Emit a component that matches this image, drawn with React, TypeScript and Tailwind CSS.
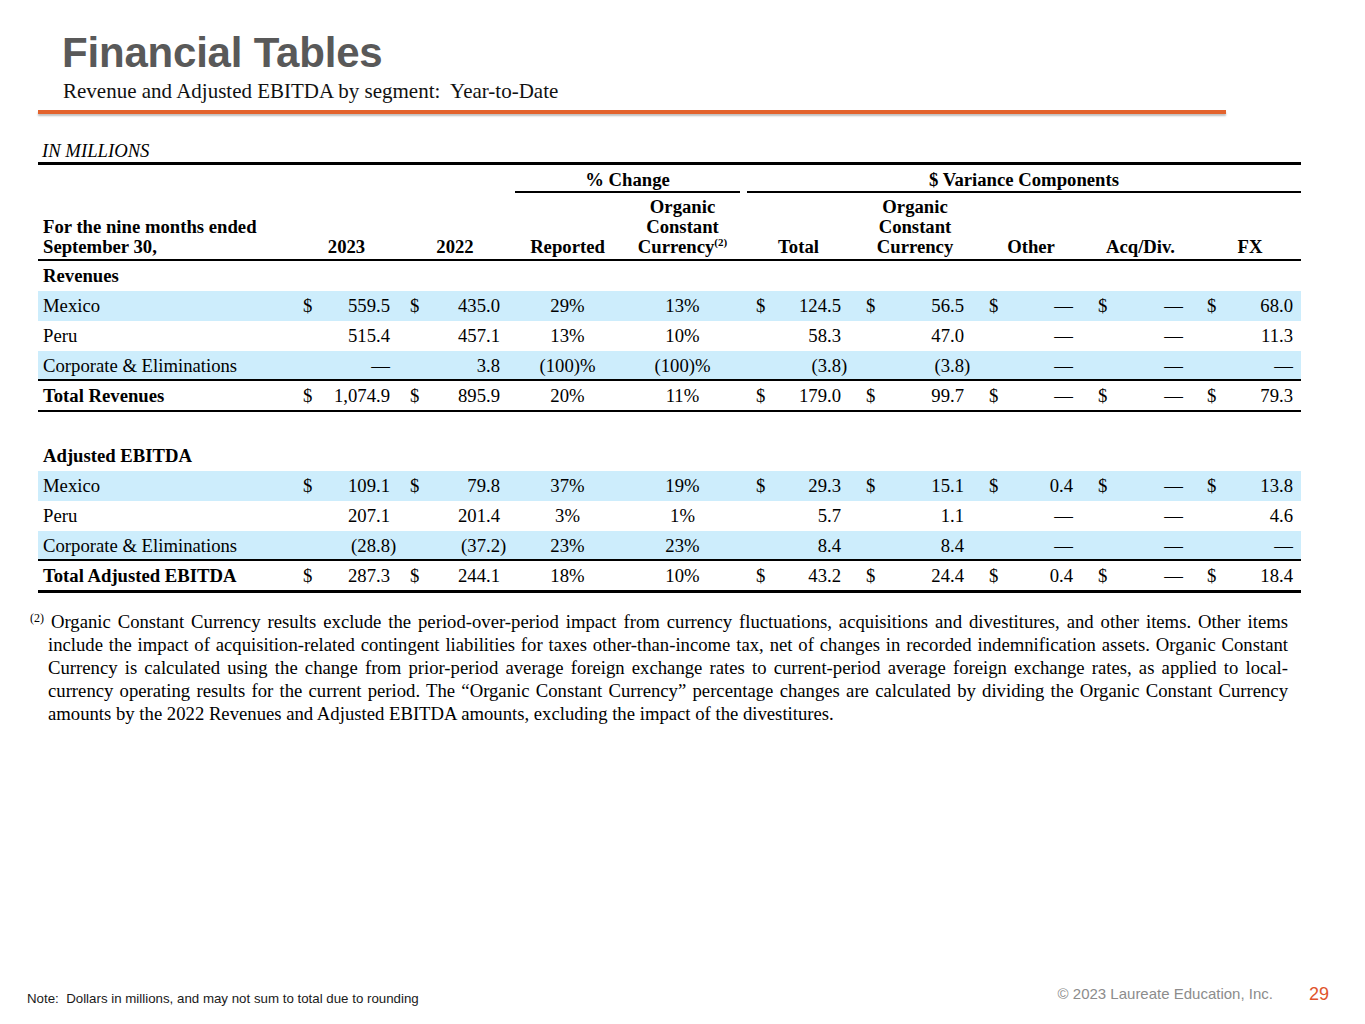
import React from "react"

const serif = "font-['Liberation_Serif','Times_New_Roman',serif]"
const sans = "font-['Liberation_Sans',Arial,sans-serif]"

const cols =
  "grid grid-cols-[260px_102px_110px_115px_115px_111px_123px_109px_110px_108px]"

// padding for each value column, so "$" and the figure land where the slide has them
const pads = [
  "pl-[5px] pr-[10px]",
  "pl-[10px] pr-[10px]",
  "",
  "",
  "pl-[16px] pr-[10px]",
  "pl-[15px] pr-[10px]",
  "pl-[15px] pr-[10px]",
  "pl-[15px] pr-[10px]",
  "pl-[14px] pr-[8px]",
]

type Row = {
  label: string
  v: string[]
  blue?: boolean
  dollar?: boolean
  total?: boolean
  line?: boolean
  last?: boolean
}

const revenues: Row[] = [
  { label: "Mexico", blue: true, dollar: true, v: ["559.5", "435.0", "29%", "13%", "124.5", "56.5", "—", "—", "68.0"] },
  { label: "Peru", v: ["515.4", "457.1", "13%", "10%", "58.3", "47.0", "—", "—", "11.3"] },
  { label: "Corporate & Eliminations", blue: true, line: true, v: ["—", "3.8", "(100)%", "(100)%", "(3.8)", "(3.8)", "—", "—", "—"] },
  { label: "Total Revenues", total: true, dollar: true, v: ["1,074.9", "895.9", "20%", "11%", "179.0", "99.7", "—", "—", "79.3"] },
]

const ebitda: Row[] = [
  { label: "Mexico", blue: true, dollar: true, v: ["109.1", "79.8", "37%", "19%", "29.3", "15.1", "0.4", "—", "13.8"] },
  { label: "Peru", v: ["207.1", "201.4", "3%", "1%", "5.7", "1.1", "—", "—", "4.6"] },
  { label: "Corporate & Eliminations", blue: true, line: true, v: ["(28.8)", "(37.2)", "23%", "23%", "8.4", "8.4", "—", "—", "—"] },
  { label: "Total Adjusted EBITDA", total: true, dollar: true, last: true, v: ["287.3", "244.1", "18%", "10%", "43.2", "24.4", "0.4", "—", "18.4"] },
]

function Figure({ value }: { value: string }) {
  // closing paren hangs past the column edge, like the printed table
  if (value.startsWith("(") && value.endsWith(")")) {
    return (
      <span>
        {value.slice(0, -1)}
        <span className="inline-block w-0">)</span>
      </span>
    )
  }
  return <span>{value}</span>
}

function rowClass(row: Row) {
  if (row.total && row.last) return "h-[32px] leading-[29px] border-b-[3px] border-black"
  if (row.total) return "h-[31px] leading-[29px] border-b-2 border-black"
  if (row.line) return "h-[30px] leading-[29px] border-b-2 border-black"
  return "h-[30px] leading-[30px]"
}

function DataRow({ row }: { row: Row }) {
  return (
    <div className={`${cols} ${rowClass(row)} ${row.blue ? "bg-[#cdedfc]" : ""}`}>
      <div className={`pl-[5px] whitespace-nowrap ${row.total ? "font-bold" : ""}`}>{row.label}</div>
      {row.v.map((val, i) =>
        i === 2 || i === 3 ? (
          <div key={i} className="text-center whitespace-nowrap">
            {val}
          </div>
        ) : (
          <div key={i} className={`flex justify-between whitespace-nowrap ${pads[i]}`}>
            <span>{row.dollar ? "$" : ""}</span>
            <Figure value={val} />
          </div>
        )
      )}
    </div>
  )
}

function SectionLabel({ children }: { children: React.ReactNode }) {
  return <div className="h-[30px] leading-[30px] pl-[5px] font-bold">{children}</div>
}

export default function App() {
  return (
    <div className="w-[1365px] h-[1024px] bg-white flex flex-col overflow-hidden text-black">
      <header className="pl-[62px] pt-[30px]">
        <h1 className={`${sans} font-bold text-[42px] leading-[46px] text-[#595959] tracking-[-0.2px]`}>
          Financial Tables
        </h1>
        <p className={`${serif} text-[21px] leading-[24px] mt-[3px] pl-px text-[#111]`}>
          Revenue and Adjusted EBITDA by segment:&nbsp; Year-to-Date
        </p>
      </header>
      <div className="ml-[38px] mt-[7px] w-[1188px] h-[4px] bg-[#e3632d] shadow-[0_2px_2px_rgba(0,0,0,0.25)]" />

      <section className={`${serif} text-[18.7px] pl-[38px]`}>
        <div className="mt-[27px] pl-[4px] italic leading-[20px]">IN MILLIONS</div>

        <div className="w-[1263px] mt-[1px] border-t-[3px] border-black">
          <div className={`${cols} font-bold leading-[20px]`}>
            <div className="col-span-3" />
            <div className="col-span-2 pt-[5px]">
              <div className="text-center pl-[5px]">% Change</div>
              <div className="mt-[1px] ml-[5px] h-[2px] bg-black" />
            </div>
            <div className="col-span-5 pt-[5px]">
              <div className="text-center pl-[7px]">$ Variance Components</div>
              <div className="mt-[1px] ml-[7px] h-[2px] bg-black" />
            </div>
          </div>
          <div className={`${cols} font-bold leading-[20px] items-end pt-[4px] pb-[2px] border-b-2 border-black`}>
            <div className="pl-[5px]">
              For the nine months ended
              <br />
              September 30,
            </div>
            <div className={`text-center ${pads[0]}`}>2023</div>
            <div className={`text-center ${pads[1]}`}>2022</div>
            <div className="text-center">Reported</div>
            <div className="text-center whitespace-nowrap">
              Organic
              <br />
              Constant
              <br />
              Currency<span className="relative -top-[7px] text-[11px] leading-none">(2)</span>
            </div>
            <div className={`text-center ${pads[4]}`}>Total</div>
            <div className={`text-center ${pads[5]}`}>
              Organic
              <br />
              Constant
              <br />
              Currency
            </div>
            <div className={`text-center ${pads[6]}`}>Other</div>
            <div className={`text-center ${pads[7]}`}>Acq/Div.</div>
            <div className={`text-center ${pads[8]}`}>FX</div>
          </div>

          <SectionLabel>Revenues</SectionLabel>
          {revenues.map((r) => (
            <DataRow key={"rev" + r.label} row={r} />
          ))}
          <div className="h-[29px]" />
          <SectionLabel>Adjusted EBITDA</SectionLabel>
          {ebitda.map((r) => (
            <DataRow key={"eb" + r.label} row={r} />
          ))}
        </div>
      </section>

      <p
        className={`${serif} text-[18.7px] leading-[23px] ml-[30px] w-[1258px] mt-[17px] pl-[18px] -indent-[18px] text-justify`}
      >
        <span className="relative -top-[6px] text-[12px] leading-none">(2)</span> Organic Constant Currency results
        exclude the period-over-period impact from currency fluctuations, acquisitions and divestitures, and other
        items. Other items include the impact of acquisition-related contingent liabilities for taxes
        other-than-income tax, net of changes in recorded indemnification assets. Organic Constant Currency is
        calculated using the change from prior-period average foreign exchange rates to current-period average foreign
        exchange rates, as applied to local-currency operating results for the current period. The “Organic Constant
        Currency” percentage changes are calculated by dividing the Organic Constant Currency amounts by the 2022
        Revenues and Adjusted EBITDA amounts, excluding the impact of the divestitures.
      </p>

      <footer className={`${sans} mt-auto flex items-center justify-between pb-[15px]`}>
        <div className="pl-[27px] pt-[10px] text-[13.3px] text-[#1a1a1a]">
          Note:&nbsp; Dollars in millions, and may not sum to total due to rounding
        </div>
        <div className="flex items-center pr-[36px]">
          <span className="text-[15px] text-[#8c8c8c]">© 2023 Laureate Education, Inc.</span>
          <span className="ml-[36px] text-[18px] text-[#e0542c]">29</span>
        </div>
      </footer>
    </div>
  )
}
